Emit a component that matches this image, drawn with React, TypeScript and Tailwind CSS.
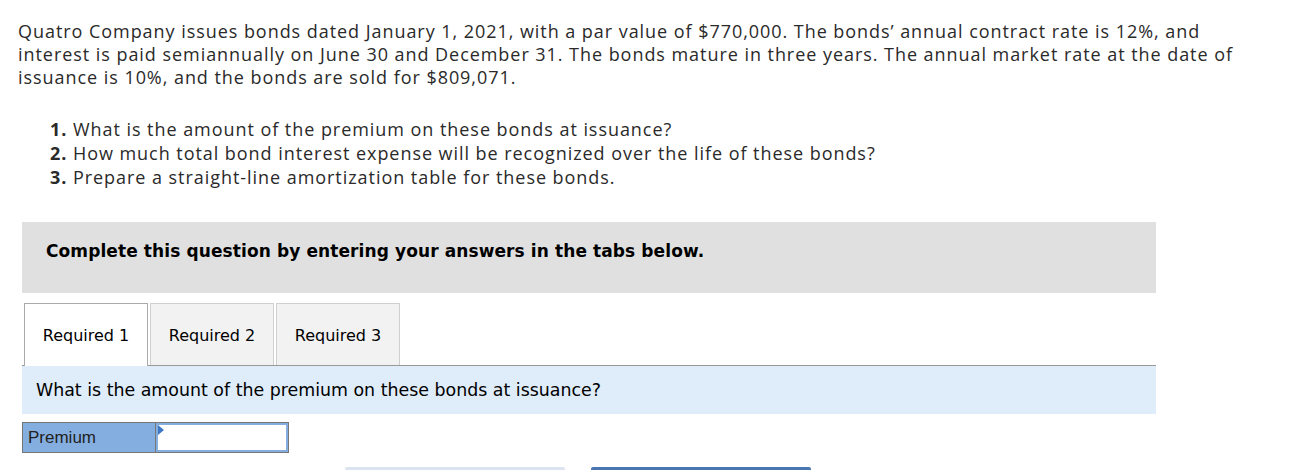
import React from 'react';

const sans = { fontFamily: '"Liberation Sans", Arial, sans-serif' };

export default function App() {
  return (
    <div className="min-h-[470px] bg-white text-[#222]">
      <div className="pl-[18px] pt-[20px]">
        <p className="font-['Open_Sans',Arial,sans-serif] text-[18px] leading-[23px] tracking-[0.95px] text-[#2a2a2a] whitespace-nowrap">
          Quatro Company issues bonds dated January 1, 2021, with a par value of $770,000. The bonds’ annual contract rate is 12%, and
          <br />
          interest is paid semiannually on June 30 and December 31. The bonds mature in three years. The annual market rate at the date of
          <br />
          issuance is 10%, and the bonds are sold for $809,071.
        </p>
        <ol className="mt-[28px] pl-[32px] font-['Open_Sans',Arial,sans-serif] text-[18px] leading-[24px] tracking-[0.95px] text-[#2a2a2a]">
          <li>
            <span className="font-bold">1.</span> What is the amount of the premium on these bonds at issuance?
          </li>
          <li>
            <span className="font-bold">2.</span> How much total bond interest expense will be recognized over the life of these bonds?
          </li>
          <li>
            <span className="font-bold">3.</span> Prepare a straight-line amortization table for these bonds.
          </li>
        </ol>
      </div>

      <div className="ml-[22px] w-[1134px] mt-[33px]">
        <div className="h-[71px] bg-[#e0e0e0] pl-[24px] pt-[19px]">
          <div className="font-['DejaVu_Sans',Verdana,sans-serif] font-bold text-[17px] leading-[20px] tracking-[0.1px] text-black">
            Complete this question by entering your answers in the tabs below.
          </div>
        </div>

        <div className="mt-[10px] flex items-end h-[63px] border-b border-[#999]">
          <div className="ml-[2px] w-[124px] h-[63px] -mb-px pt-[2px] bg-white border border-b-0 border-[#aaa] flex items-center justify-center font-['DejaVu_Sans',Verdana,sans-serif] text-[16px] text-black">
            Required 1
          </div>
          <div className="ml-[2px] w-[124px] h-[62px] pt-[2px] bg-[#f2f2f2] border border-b-0 border-[#cfcfcf] flex items-center justify-center font-['DejaVu_Sans',Verdana,sans-serif] text-[16px] text-black">
            Required 2
          </div>
          <div className="ml-[2px] w-[124px] h-[62px] pt-[2px] bg-[#f2f2f2] border border-b-0 border-[#cfcfcf] flex items-center justify-center font-['DejaVu_Sans',Verdana,sans-serif] text-[16px] text-black">
            Required 3
          </div>
        </div>

        <div className="h-[48px] bg-[#dfecf9] flex items-center pl-[14px] font-['DejaVu_Sans',Verdana,sans-serif] text-[17.4px] text-black">
          What is the amount of the premium on these bonds at issuance?
        </div>

        <div className="mt-[8px] flex w-[267px] h-[31px] border border-[#777]">
          <div className="w-[133px] bg-[#84aee0] border-r border-[#777] flex items-center pl-[5px] text-[17px] text-[#222]" style={sans}>
            Premium
          </div>
          <div className="relative flex-1 bg-white border-2 border-[#84aee0]">
            <div className="absolute left-0 top-0 w-0 h-0 border-t-[5px] border-b-[5px] border-l-[6px] border-t-transparent border-b-transparent border-l-[#3f78c4]" />
          </div>
        </div>

        <div className="mt-[14px] flex gap-[26px] pl-[323px]">
          <div className="w-[220px] h-[10px] bg-[#dce4ef] rounded-t-[2px]" />
          <div className="w-[220px] h-[10px] bg-[#4a76b4] rounded-t-[2px]" />
        </div>
      </div>
    </div>
  );
}
